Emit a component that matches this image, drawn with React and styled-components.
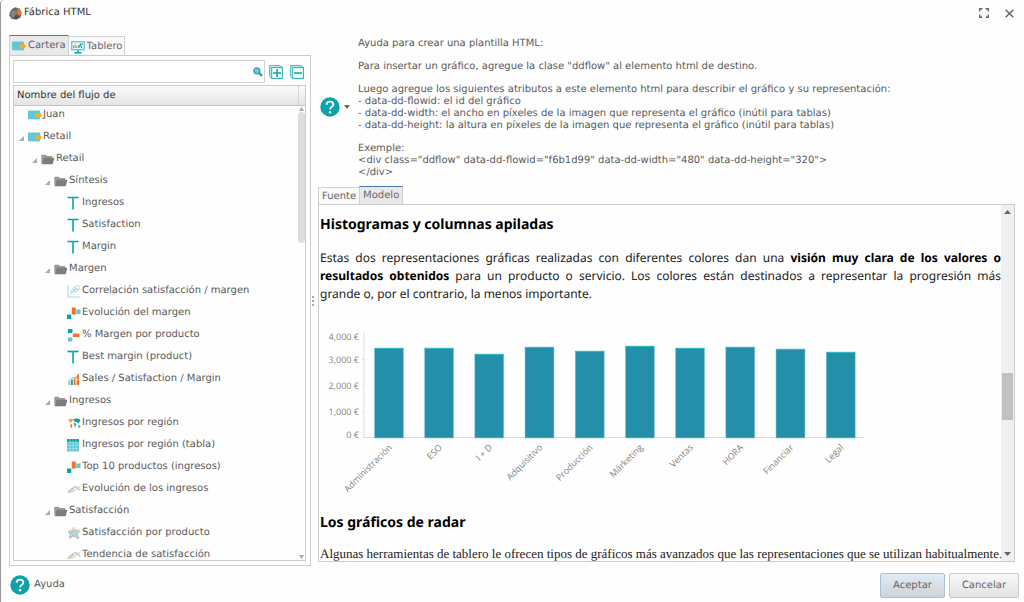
import React from "react";
import styled, { createGlobalStyle, css } from "styled-components";

const GlobalStyle = createGlobalStyle`
  * { box-sizing: border-box; }
  body { margin: 0; background: #fff; }
  button, input { font: inherit; color: inherit; text-rendering: inherit; }
  h2, p, ul { margin: 0; padding: 0; }
`;

const Dialog = styled.div`
  height: 100vh;
  display: flex;
  flex-direction: column;
  font: 10px/12px "DejaVu Sans", Verdana, sans-serif;
  text-rendering: geometricPrecision;
  color: #5a5a5a;
  background: #fefefe;
  border-left: 1px solid #999;
  border-top-left-radius: 4px;
  overflow: hidden;
`;

const TitleBar = styled.header`
  display: flex;
  align-items: center;
  gap: 2px;
  height: 26px;
  padding: 0 10px 0 8px;
  flex: none;
  color: #333;
`;

const Title = styled.span`
  flex: 1;
`;

const PlainButton = styled.button`
  display: inline-flex;
  align-items: center;
  gap: 4px;
  padding: 0;
  border: 0;
  background: none;
  cursor: pointer;
`;

const WindowTools = styled.div`
  display: flex;
  gap: 16px;
`;

const Body = styled.main`
  flex: 1;
  min-height: 0;
  display: flex;
  padding: 9px 9px 0 8px;
`;

const SidePane = styled.section`
  flex: 0 0 302px;
  display: flex;
  flex-direction: column;
  min-height: 0;
`;

const TabList = styled.div`
  display: flex;
  align-items: flex-end;
  margin-bottom: -1px;
`;

const Tab = styled.button`
  display: flex;
  align-items: center;
  gap: 2px;
  height: ${(p) => (p.$tall ? 20 : 18)}px;
  padding: 1px ${(p) => (p.$tall ? 2 : 3)}px 0;
  border: 1px solid #d0d0d0;
  background: #fafafa;
  color: #666;
  &:not(:first-child) { margin-left: -1px; }
  ${(p) =>
    p["aria-selected"] &&
    css`
      height: ${p.$tall ? 21 : 19}px;
      border-top-color: #4a7ab5;
      border-bottom-color: #e9e9e9;
      background: #e9e9e9;
    `}
`;

const SidePanel = styled.div`
  flex: 1;
  min-height: 0;
  display: flex;
  flex-direction: column;
  gap: 2px;
  padding: 4px 4px 4px 3px;
  border: 1px solid #ccc;
`;

const SearchRow = styled.div`
  display: flex;
  align-items: center;
  gap: 4px;
  padding-right: 2px;
`;

const FoldButtons = styled.div`
  display: flex;
  gap: 7px;
`;

const SearchBox = styled.label`
  flex: 1;
  display: flex;
  align-items: center;
  height: 23px;
  padding-right: 1px;
  border: 1px solid #d2d2d2;
  background: #fff;
  input {
    flex: 1;
    min-width: 0;
    border: 0;
    outline: 0;
    background: none;
  }
`;

const TreeGrid = styled.div`
  flex: 1;
  min-height: 0;
  display: flex;
  flex-direction: column;
  border: 1px solid #ccc;
`;

const TreeHeader = styled.div`
  display: flex;
  flex: none;
  align-items: stretch;
  height: 20px;
  line-height: 20px;
  border-bottom: 1px solid #c4c4c4;
  background: linear-gradient(#fbfbfb, #e4e4e4);
  color: #333;
  span { flex: 1; padding-left: 3px; }
  i { width: 7px; border-left: 1px solid #d4d4d4; }
`;

const TreeBody = styled.div`
  flex: 1;
  min-height: 0;
  display: flex;
  overflow: hidden;
`;

const Tree = styled.ul`
  flex: 1;
  margin-top: -2px;
  list-style: none;
`;

const TreeRow = styled.li`
  display: flex;
  align-items: center;
  height: 22px;
  padding-left: ${(p) => p.$level * 13 + 1}px;
  white-space: nowrap;
`;

const Expander = styled.span`
  display: flex;
  justify-content: center;
  width: 13px;
  padding-top: 3px;
`;

const IconSlot = styled.span`
  display: flex;
  width: 15px;
`;

const SlimScroll = styled.div`
  display: flex;
  flex-direction: column;
  align-items: center;
  width: 7px;
  padding: 1px 0;
`;

const SlimThumb = styled.div`
  width: 7px;
  flex: 0 0 29%;
  margin: 1px 0 auto;
  border-radius: 4px;
  background: #dedede;
`;

const Splitter = styled.div`
  flex: 0 0 7px;
  display: flex;
  flex-direction: column;
  align-items: center;
  justify-content: center;
  gap: 2px;
  padding-right: 3px;
  i { width: 2px; height: 2px; background: #aaa; }
`;

const MainPane = styled.section`
  flex: 1;
  min-width: 0;
  min-height: 0;
  display: flex;
  flex-direction: column;
  padding-bottom: 4px;
`;

const HelpBox = styled.div`
  display: flex;
  align-items: center;
  gap: 8px;
  padding: 0 0 7px 2px;
`;

const HelpText = styled.div`
  display: flex;
  flex-direction: column;
  gap: 11px;
  padding-top: 3px;
`;

const Preview = styled.div`
  flex: 1;
  min-height: 0;
  display: flex;
  border: 1px solid #ccc;
  background: #fefefe;
`;

const Article = styled.article`
  flex: 1;
  min-width: 0;
  overflow: hidden;
  padding: 10px 0 0 1px;
  color: #222;
  font: 12px/18px "Noto Sans", "Segoe UI", sans-serif;
`;

const Heading = styled.h2`
  font-size: 14px;
  line-height: 20px;
  font-weight: 700;
  color: #000;
`;

const Paragraph = styled.p`
  margin-top: ${(p) => (p.$serif ? 12 : 14)}px;
  text-align: justify;
  strong { color: #000; }
  ${(p) =>
    p.$serif &&
    css`
      font-family: "Liberation Serif", "Times New Roman", serif;
      font-size: 13px;
      white-space: nowrap;
    `}
`;

const ChartFigure = styled.figure`
  margin: 22px 0 8px;
  svg { display: block; }
  text { font: 9px "Open Sans", "Segoe UI", sans-serif; fill: #858585; }
`;

const PageScroll = styled.div`
  display: flex;
  flex-direction: column;
  align-items: center;
  justify-content: space-between;
  width: 13px;
  padding: 5px 0;
  background: #f0f0f0;
`;

const PageThumb = styled.div`
  width: 11px;
  height: 47px;
  margin-top: 26px;
  background: #c1c1c1;
`;

const Footer = styled.footer`
  flex: none;
  display: flex;
  align-items: center;
  gap: 4px;
  height: 36px;
  padding: 2px 5px 0 9px;
`;

const HelpLink = styled(PlainButton)`
  margin-right: auto;
`;

const ActionButton = styled.button`
  height: 25px;
  padding: 2px 12px 0;
  border: 1px solid ${(p) => (p.$primary ? "#a9bfd4" : "#c8c8c8")};
  border-radius: 2px;
  background: ${(p) =>
    p.$primary
      ? "linear-gradient(#dfecf6, #cfd3d6)"
      : "linear-gradient(#f8f8f8, #e3e3e3)"};
  color: #666;
`;

const TEAL = "#0ba3a8";
const SKY = "#62c8d8";
const ORANGE = "#f0732a";

const Svg = ({ size = 14, children, ...rest }) => (
  <svg width={size} height={size} viewBox="0 0 14 14" aria-hidden="true" {...rest}>
    {children}
  </svg>
);

const icons = {
  wallet: (
    <>
      <path d="M0 3.200Q0 2.400.8 2.600L11 2.400q1 0 1 1v7.200q0 1-1 1L1 11.300Q0 11.300 0 10.400z" fill={SKY} />
      <path d="M7.500 7.200Q7.500 5 9.600 5H12q1.500.6 1.500 2.200T12 9.500H9.600Q7.500 9.400 7.500 7.200z" fill="#f5aa2c" />
      <circle cx="9.300" cy="7.200" r=".8" fill="#e8c56a" />
    </>
  ),
  board: (
    <>
      <rect x=".7" y="1.700" width="12.600" height="8" fill="#e6f7f8" stroke={SKY} strokeWidth="1.300" />
      <path d="M2.500 8V5.500M4.200 8V4.500M5.900 8V6" stroke={ORANGE} strokeWidth="1" />
      <path d="M8 8V5.500h1.500V4H12M10.500 8V6" stroke={TEAL} strokeWidth="1.200" fill="none" />
      <path d="M7 10v2M3.500 12.700h7" stroke={TEAL} strokeWidth="1.500" />
    </>
  ),
  folder: (
    <>
      <path d="M.3 12V3.500q0-.8.8-.8h3.500l1.200 1.200h4.700q.8 0 .8.8v1.500H3.400z" fill="#9a9a9a" />
      <path d="M3.200 5.800H12.600q.8 0 .6.700l-1.300 5q-.2.700-.8.700H1.200q-.4 0-.3-.4l1.600-5.400q.1-.6.700-.6z" fill="#7c7c7c" />
    </>
  ),
  text: (
    <>
      <path d="M.5 1.500h11" stroke={TEAL} strokeWidth="1.700" />
      <path d="M6 1.500v12" stroke="#35b6ba" strokeWidth="2" />
    </>
  ),
  scatter: (
    <g fill="none" stroke="#9bd8e0" strokeWidth=".9">
      <path d="M1 1v12h12.500" />
      <path d="M2.500 11.500 8 6" stroke="#ccc" />
      <circle cx="5.500" cy="7.200" r="1.500" />
      <circle cx="9" cy="6.200" r="1.600" />
      <circle cx="10.500" cy="3.500" r="2" />
      <circle cx="7.300" cy="4.500" r="1.200" />
    </g>
  ),
  waterfall: (
    <>
      <rect y="8.500" width="4.300" height="4.500" fill={TEAL} />
      <rect x="4.800" y="1.500" width="4" height="7" fill={ORANGE} />
      <rect x="9.300" y="3.500" width="4.200" height="4.500" fill={SKY} />
    </>
  ),
  hbars: (
    <>
      <rect x="1" y="1" width="4.500" height="4" fill={TEAL} />
      <rect x="5.800" y="5.500" width="6.700" height="3.500" fill={ORANGE} />
      <rect x="1" y="9.500" width="4.500" height="4" fill={SKY} />
    </>
  ),
  combo: (
    <>
      <path d="M2.300 13V9" stroke={SKY} strokeWidth="1.800" />
      <path d="M4.900 13V7.500" stroke={TEAL} strokeWidth="1.800" />
      <path d="M7.600 13V6.500M11 13V2.500" stroke={ORANGE} strokeWidth="2" />
      <path d="M9.300 13V5.500" stroke="#f5b98c" strokeWidth="1.200" />
      <path d="M1.500 9 5 5.500l3 .5L12.300 1.500" fill="none" stroke="#b8a184" strokeWidth=".9" />
      <path d="M8 8.500 12 7" stroke="#fff" strokeWidth=".6" />
    </>
  ),
  map: (
    <>
      <path d="M1 3.500 4 2.500l2.500 1L5 5.500 3.500 7z" fill="#f3a33c" />
      <path d="M3.500 7.500 5.500 9 4.500 12.500 3.500 11z" fill={ORANGE} />
      <path d="M6.500 3 9 2.500l3.500.5.800 2-2 2.200L9.500 6 7 5.500z" fill={TEAL} />
      <path d="M6.500 6.500 8.500 7l.8 2L8 11.500 7 9zM11 9.500h2.200v2H11z" fill="#36b3ba" />
    </>
  ),
  table: (
    <>
      <rect x="0" y="1" width="12" height="12.500" fill={SKY} />
      <rect x="0" y="1" width="12" height="3" fill={TEAL} />
      <path d="M3 1v12.500M6 1v12.500M9 1v12.500M0 4.200h12M0 7.300h12M0 10.400h12" stroke="#bfe9ee" strokeWidth=".5" />
    </>
  ),
  line: (
    <g fill="none" strokeWidth="1.200">
      <path d="M1 11 4.500 7 8.500 4.500 11 6.500l2.500 2" stroke="#8fd4dc" />
      <path d="M1 8.500 4 10.500 8 8l5-3.500" stroke="#f3c8a4" />
      <path d="M2.500 9.500 7 6.500" stroke="#c4c4c4" />
    </g>
  ),
  radar: (
    <g strokeWidth=".9">
      <path d="m6.500 1 1.700 3.300 4.500-.5L10 7.200l2 5-5-2-4.500 2.500 1.200-5L1 5.200l4-.7z" fill="#fbe5d6" stroke="#f0bf9c" />
      <path d="M7 3.500 12.500 6 9.500 8.500 11 12.800 6.500 9.500 2.500 11.500 4 8 1.500 6.500 5 5.500z" fill="#c9e9ec" stroke="#7fcbd4" />
      <path d="M5 5.800h4v3.200H5z" fill="none" stroke="#b5b5b5" />
    </g>
  ),
};

const Icon = ({ name, size }) => <Svg size={size}>{icons[name]}</Svg>;

const HelpIcon = () => (
  <svg width="20" height="20" viewBox="0 0 20 20" aria-hidden="true">
    <circle cx="10" cy="10" r="9.700" fill={TEAL} />
    <path d="M6.600 7.800Q6.700 4.600 10 4.600q3.300 0 3.300 2.800 0 1.500-1.800 2.600-1.400.9-1.400 2.500" fill="none" stroke="#fff" strokeWidth="1.800" />
    <circle cx="10.100" cy="15.200" r="1.200" fill="#fff" />
  </svg>
);

const Caret = ({ up, color = "#666", width = 7 }) => (
  <svg width={width} height="4" viewBox="0 0 8 4" preserveAspectRatio="none" aria-hidden="true">
    <path d={up ? "M0 4h8L4 0z" : "M0 0h8L4 4z"} fill={color} />
  </svg>
);

const FoldIcon = ({ plus }) => (
  <Svg>
    <path d="M.6.6h10.900l1.900 2v10.800H2.600L.6 11.500z" fill="#c5eaec" stroke="#4cbcc0" strokeWidth="1" />
    <rect x="2.700" y="2.600" width="10.700" height="10.800" fill="#f4ffff" stroke="#2fb0b5" />
    <path d={plus ? "M4 8h8M8 4v8" : "M4 8h8"} stroke={TEAL} strokeWidth="1.500" />
  </Svg>
);

const treeItems = [
  [0, "wallet", "Juan", false],
  [0, "wallet", "Retail", true],
  [1, "folder", "Retail", true],
  [2, "folder", "Síntesis", true],
  [3, "text", "Ingresos"],
  [3, "text", "Satisfaction"],
  [3, "text", "Margin"],
  [2, "folder", "Margen", true],
  [3, "scatter", "Correlación satisfacción / margen"],
  [3, "waterfall", "Evolución del margen"],
  [3, "hbars", "% Margen por producto"],
  [3, "text", "Best margin (product)"],
  [3, "combo", "Sales / Satisfaction / Margin"],
  [2, "folder", "Ingresos", true],
  [3, "map", "Ingresos por región"],
  [3, "table", "Ingresos por región (tabla)"],
  [3, "waterfall", "Top 10 productos (ingresos)"],
  [3, "line", "Evolución de los ingresos"],
  [2, "folder", "Satisfacción", true],
  [3, "radar", "Satisfacción por producto"],
  [3, "line", "Tendencia de satisfacción"],
];

const bars = [
  ["Administración", 90],
  ["ESO", 90],
  ["I + D", 84],
  ["Adquisitivo", 91],
  ["Producción", 87],
  ["Márketing", 92],
  ["Ventas", 90],
  ["HORA", 91],
  ["Financiar", 89],
  ["Legal", 86],
];

const yLabels = [
  ["4,000 €", 15],
  ["3,000 €", 38],
  ["2,000 €", 64],
  ["1,000 €", 90],
  ["0 €", 113],
];

const BarChart = () => (
  <svg width="546" height="180" viewBox="0 0 546 180" role="img" aria-label="Histograma">
    <path d="M44 8v105M42 34.500h2M42 60.500h2M42 86.500h2M43 112.500h501" stroke="#ddd" />
    {yLabels.map(([label, y]) => (
      <text key={label} x="39" y={y} textAnchor="end">{label}</text>
    ))}
    {bars.map(([label, h], i) => {
      const x = 54.4 + i * 50.2;
      return (
        <g key={label}>
          <rect x={x} y={113 - h} width="29" height={h} fill="#248fa8" stroke="#8ad0d8" strokeWidth=".6" />
          <path d={`M${x} ${113.5 - h}h29`} stroke="#35b8bf" />
          <text transform={`translate(${x + 18} 123) rotate(-45)`} textAnchor="end">{label}</text>
        </g>
      );
    })}
  </svg>
);

export default function App() {
  return (
    <>
      <GlobalStyle />
      <Dialog role="dialog" aria-label="Fábrica HTML">
        <TitleBar>
          <Svg size={13}>
            <path d="M3.500 2 7 .3l4.500 1.500 2 4-1 5.500L8 13.700l-5.500-1L.3 9 1 5z" fill="#696969" />
            <path d="M1.500 6 5 3l2.500 2-1 5L3 12z" fill="#858585" />
            <path d="m8.500 3 3.300-.5 1.800 3.700-2 3L8.300 7z" fill="#ef7128" />
            <path d="M7 8.500 10.500 10l-1.500 3L5 12.500z" fill="#4d4d4d" />
          </Svg>
          <Title>Fábrica HTML</Title>
          <WindowTools>
            <PlainButton aria-label="Maximizar">
              <svg width="10" height="10" viewBox="0 0 10 10" fill="none" stroke="#666" strokeWidth="1.400">
                <path d="M.7 3.500V.7h2.800M6.500.7h2.800v2.800M9.300 6.500v2.800H6.500M3.500 9.300H.7V6.500" />
              </svg>
            </PlainButton>
            <PlainButton aria-label="Cerrar">
              <svg width="9" height="9" viewBox="0 0 9 9" stroke="#666" strokeWidth="1.500">
                <path d="m.7.7 7.600 7.600M8.300.7.7 8.300" />
              </svg>
            </PlainButton>
          </WindowTools>
        </TitleBar>

        <Body>
          <SidePane>
            <TabList role="tablist">
              <Tab $tall role="tab" aria-selected={true}><Icon name="wallet" />Cartera</Tab>
              <Tab $tall role="tab" aria-selected={false}><Icon name="board" />Tablero</Tab>
            </TabList>
            <SidePanel>
              <SearchRow>
                <SearchBox>
                  <input type="text" aria-label="Buscar" />
                  <svg width="10" height="10" viewBox="0 0 10 10" aria-hidden="true">
                    <path d="m5.800 5.800 3.200 3.200" stroke={TEAL} strokeWidth="2.200" />
                    <circle cx="3.800" cy="3.800" r="3" fill="#7cc8d4" stroke="#2aa5b0" strokeWidth="1.300" />
                  </svg>
                </SearchBox>
                <FoldButtons>
                  <PlainButton aria-label="Expandir todo"><FoldIcon plus /></PlainButton>
                  <PlainButton aria-label="Contraer todo"><FoldIcon /></PlainButton>
                </FoldButtons>
              </SearchRow>
              <TreeGrid>
                <TreeHeader><span>Nombre del flujo de</span><i /></TreeHeader>
                <TreeBody>
                  <Tree role="tree">
                    {treeItems.map(([level, icon, label, open], i) => (
                      <TreeRow key={i} $level={level} role="treeitem" aria-level={level + 1}>
                        <Expander>
                          {open && (
                            <svg width="5" height="5" viewBox="0 0 5 5"><path d="M0 5h5V0z" fill="#aaa" /></svg>
                          )}
                        </Expander>
                        <IconSlot><Icon name={icon} /></IconSlot>
                        {label}
                      </TreeRow>
                    ))}
                  </Tree>
                  <SlimScroll>
                    <Caret up color="#aaa" width={5} />
                    <SlimThumb />
                    <Caret color="#aaa" width={5} />
                  </SlimScroll>
                </TreeBody>
              </TreeGrid>
            </SidePanel>
          </SidePane>

          <Splitter><i /><i /><i /></Splitter>

          <MainPane>
            <HelpBox>
              <PlainButton aria-label="Ayuda de plantilla">
                <HelpIcon />
                <Caret width={6} />
              </PlainButton>
              <HelpText>
                <p>Ayuda para crear una plantilla HTML:</p>
                <p>Para insertar un gráfico, agregue la clase "ddflow" al elemento html de destino.</p>
                <p>
                  Luego agregue los siguientes atributos a este elemento html para describir el gráfico y su representación:<br />
                  - data-dd-flowid: el id del gráfico<br />
                  - data-dd-width: el ancho en píxeles de la imagen que representa el gráfico (inútil para tablas)<br />
                  - data-dd-height: la altura en píxeles de la imagen que representa el gráfico (inútil para tablas)
                </p>
                <p>
                  Exemple:<br />
                  {'<div class="ddflow" data-dd-flowid="f6b1d99" data-dd-width="480" data-dd-height="320">'}<br />
                  {"</div>"}
                </p>
              </HelpText>
            </HelpBox>
            <TabList role="tablist">
              <Tab role="tab" aria-selected={false}>Fuente</Tab>
              <Tab role="tab" aria-selected={true}>Modelo</Tab>
            </TabList>
            <Preview>
              <Article>
                <Heading>Histogramas y columnas apiladas</Heading>
                <Paragraph>
                  Estas dos representaciones gráficas realizadas con diferentes colores dan una{" "}
                  <strong>visión muy clara de los valores o resultados obtenidos</strong> para un producto o
                  servicio. Los colores están destinados a representar la progresión más grande{"\u00a0"}o, por el
                  contrario, la menos importante.
                </Paragraph>
                <ChartFigure><BarChart /></ChartFigure>
                <Heading>Los gráficos de radar</Heading>
                <Paragraph $serif>
                  Algunas herramientas de tablero le ofrecen tipos de gráficos más avanzados que las
                  representaciones que se utilizan habitualmente.
                </Paragraph>
              </Article>
              <PageScroll>
                <Caret up />
                <PageThumb />
                <Caret />
              </PageScroll>
            </Preview>
          </MainPane>
        </Body>

        <Footer>
          <HelpLink><HelpIcon />Ayuda</HelpLink>
          <ActionButton $primary>Aceptar</ActionButton>
          <ActionButton>Cancelar</ActionButton>
        </Footer>
      </Dialog>
    </>
  );
}
